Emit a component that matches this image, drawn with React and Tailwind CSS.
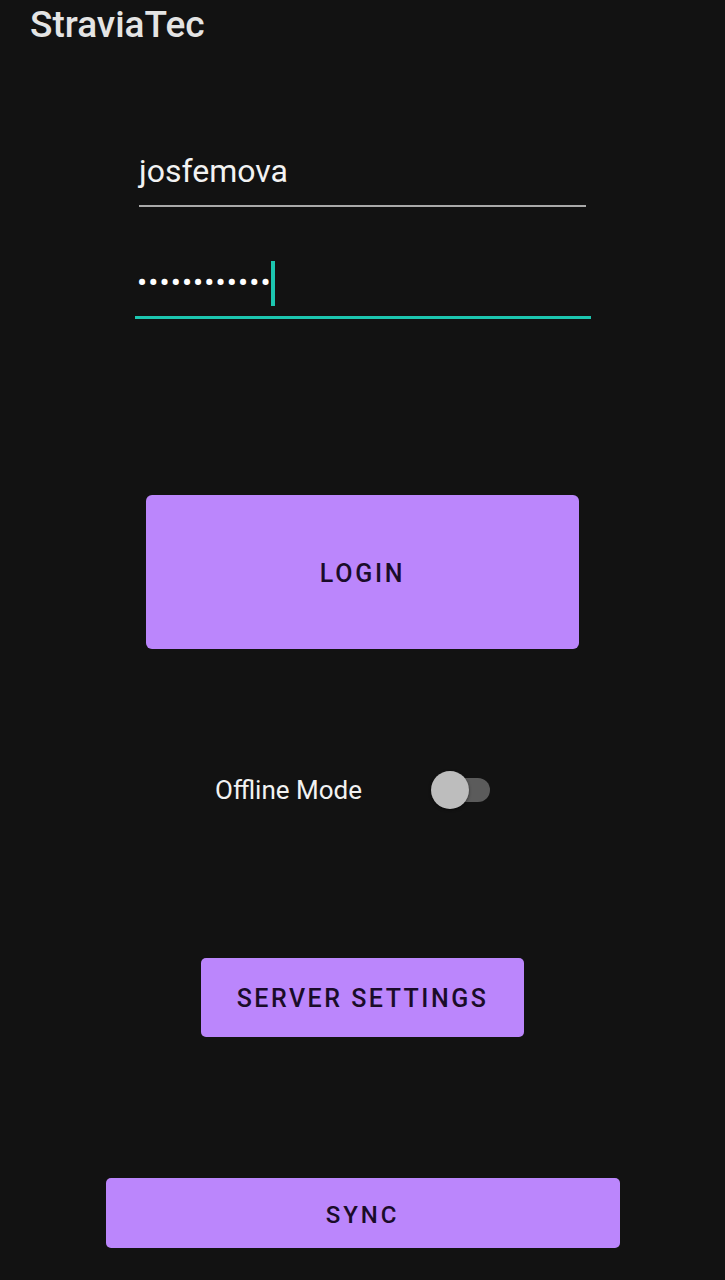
export default function App() {
  return (
    <div className="h-[1280px] w-full overflow-hidden bg-[#121212] font-['Roboto',sans-serif]">
      <h1 className="pl-[30px] pt-[6px] text-[37px] leading-none font-medium text-[#e4e4e4]">
        StraviaTec
      </h1>

      <div className="ml-[139px] mt-[112px] w-[447px] border-b-2 border-[#a9a9a9] pb-[18px]">
        <div className="text-[32px] leading-none text-[#f2f2f2]">josfemova</div>
      </div>

      <div className="ml-[135px] mt-[51px] w-[456px] border-b-[3px] border-[#1cc6b0] pb-[8px]">
        <div className="flex h-[50px] items-center pl-[2px]">
          <span className="text-[30px] leading-none tracking-[1.1px] text-white">••••••••••••</span>
          <span className="-ml-[1px] inline-block h-[45px] w-[4px] bg-[#1cc6b0]" />
        </div>
      </div>

      <button className="mx-auto mt-[176px] flex h-[154px] w-[433px] items-center justify-center rounded-[6px] bg-[#bb86fc] pt-[4px] text-[25px] font-medium tracking-[0.11em] text-[#1a0c29]">
        LOGIN
      </button>

      <div className="ml-[215px] mt-[121px] flex h-[40px] items-center">
        <span className="w-[216px] text-[26px] leading-none text-[#f2f2f2]">Offline Mode</span>
        <div className="relative h-[40px] w-[60px]">
          <div className="absolute left-[9px] top-[8px] h-[24px] w-[50px] rounded-full bg-[#5b5b5b]" />
          <div className="absolute left-0 top-[1px] h-[38px] w-[38px] rounded-full bg-[#bdbdbd] shadow-[0_1px_3px_rgba(0,0,0,0.5)]" />
        </div>
      </div>

      <button className="mx-auto mt-[148px] flex h-[79px] w-[323px] items-center justify-center rounded-[5px] bg-[#bb86fc] pt-[3px] text-[25px] font-medium tracking-[0.1em] text-[#1a0c29]">
        SERVER SETTINGS
      </button>

      <button className="mx-auto mt-[141px] flex h-[70px] w-[514px] items-center justify-center rounded-[5px] bg-[#bb86fc] pt-[4px] text-[24px] font-medium tracking-[0.12em] text-[#1a0c29]">
        SYNC
      </button>
    </div>
  );
}
